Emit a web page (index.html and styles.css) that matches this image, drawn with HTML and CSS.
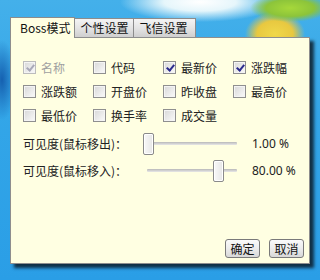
FILE: index.html
```html
<!DOCTYPE html>
<html>
<head>
<meta charset="utf-8">
<link rel="stylesheet" href="styles.css">
</head>
<body>
<div class="desktop">
  <div class="window">
    <div class="tabs">
      <div class="tab active">Boss模式</div>
      <div class="tab">个性设置</div>
      <div class="tab last">飞信设置</div>
    </div>
    <div class="panel">
      <div class="checks">
        <label class="opt disabled"><span class="box checked"></span>名称</label>
        <label class="opt"><span class="box"></span>代码</label>
        <label class="opt"><span class="box checked"></span>最新价</label>
        <label class="opt"><span class="box checked"></span>涨跌幅</label>
        <label class="opt"><span class="box"></span>涨跌额</label>
        <label class="opt"><span class="box"></span>开盘价</label>
        <label class="opt"><span class="box"></span>昨收盘</label>
        <label class="opt"><span class="box"></span>最高价</label>
        <label class="opt"><span class="box"></span>最低价</label>
        <label class="opt"><span class="box"></span>换手率</label>
        <label class="opt"><span class="box"></span>成交量</label>
      </div>
      <div class="sliders">
        <div class="slider-row">
          <span class="slabel">可见度(鼠标移出)：</span>
          <div class="slider"><div class="track"></div><div class="thumb" style="left:0px"></div></div>
          <span class="sval">1.00 %</span>
        </div>
        <div class="slider-row">
          <span class="slabel">可见度(鼠标移入)：</span>
          <div class="slider"><div class="track"></div><div class="thumb" style="left:70px"></div></div>
          <span class="sval">80.00 %</span>
        </div>
      </div>
      <div class="buttons">
        <button class="btn">确定</button>
        <button class="btn">取消</button>
      </div>
    </div>
  </div>
</div>
</body>
</html>
```
FILE: styles.css
```css
html, body {
  margin: 0;
  padding: 0;
}
body {
  width: 320px;
  height: 280px;
  overflow: hidden;
  font-family: "Noto Sans CJK SC", "Noto Sans", sans-serif;
  font-size: 12px;
  color: #222;
}
.desktop {
  width: 320px;
  height: 280px;
  padding-top: 17px;
  padding-left: 10px;
  box-sizing: border-box;
  background:
    radial-gradient(ellipse 40px 14px at 290px 8px, #a6d83a 0%, #8cc43a 60%, rgba(140,196,58,0) 100%),
    radial-gradient(ellipse 30px 22px at 275px 34px, #f0d84a 0%, #e8c840 60%, rgba(232,200,64,0) 100%),
    radial-gradient(ellipse 80px 20px at 200px 2px, #ffffff 0%, #e6f6fb 45%, rgba(200,236,250,0) 100%),
    radial-gradient(ellipse 14px 40px at 2px 80px, #1560b0 0%, rgba(21,96,176,0) 100%),
    linear-gradient(180deg, #44b0ea 0%, #33a6e8 40%, #2a9ee6 100%);
}
.window {
  width: 300px;
}
.tabs {
  display: flex;
  align-items: flex-end;
  height: 20px;
  position: relative;
  z-index: 2;
}
.tab {
  height: 18px;
  line-height: 18px;
  padding: 0 5px;
  border: 1px solid #8c8c8c;
  border-bottom: none;
  background: linear-gradient(180deg, #f4f4f4 0%, #e4e4e4 50%, #cfcfcf 100%);
  font-size: 12px;
  color: #111;
  margin-left: -1px;
}
.tab:first-child {
  margin-left: 0;
}
.tab.last {
  padding-right: 8px;
}
.tab.active {
  height: 20px;
  line-height: 20px;
  padding: 0 4px 0 9px;
  background: #ffffe2;
  margin-bottom: -1px;
  position: relative;
  z-index: 3;
}
.panel {
  position: relative;
  z-index: 1;
  height: 227px;
  box-sizing: border-box;
  border: 1px solid #8e8e8e;
  background: #ffffe2;
  box-shadow: 4px 4px 3px rgba(10, 20, 30, 0.8);
  padding: 17px 5px 5px 12px;
  display: flex;
  flex-direction: column;
}
.checks {
  display: grid;
  grid-template-columns: repeat(4, 70px);
  grid-auto-rows: 24px;
}
.opt {
  display: flex;
  align-items: center;
  gap: 5px;
  font-size: 12px;
  color: #222;
}
.opt.disabled {
  color: #a0a0a0;
}
.box {
  width: 11px;
  height: 11px;
  border: 1px solid #8f8f8f;
  background: linear-gradient(135deg, #d8d8d8 0%, #ececec 60%, #fafafa 100%);
  box-shadow: inset 0 0 0 1px #f4f4f4;
  position: relative;
  flex: none;
}
.box.checked::after {
  content: "";
  position: absolute;
  left: 4px;
  top: 1px;
  width: 3px;
  height: 6px;
  border: solid #2a2a8c;
  border-width: 0 2px 2px 0;
  transform: rotate(40deg);
}
.disabled .box {
  border-color: #bcbcbc;
}
.disabled .box.checked::after {
  border-color: #a8a8b8;
}
.sliders {
  margin-top: 3px;
}
.slider-row {
  display: flex;
  align-items: center;
  height: 27px;
}
.slabel {
  width: 120px;
}
.slider {
  position: relative;
  width: 94px;
  height: 21px;
}
.track {
  position: absolute;
  left: 4px;
  right: 0;
  top: 9px;
  height: 3px;
  background: linear-gradient(180deg, #b8b8b8 0%, #e8e8e8 100%);
  border-radius: 1px;
}
.thumb {
  position: absolute;
  top: 0;
  width: 9px;
  height: 20px;
  border: 1px solid #8a8a8a;
  border-radius: 2px;
  background: linear-gradient(90deg, #f8f8f8 0%, #e6e6e6 100%);
  box-shadow: inset 0 0 0 1px #ffffff;
}
.sval {
  margin-left: 15px;
  font-family: "Noto Sans", sans-serif;
  font-size: 12px;
}
.buttons {
  margin-top: auto;
  display: flex;
  justify-content: flex-end;
  gap: 9px;
}
.btn {
  width: 35px;
  height: 19px;
  padding: 0;
  border: 1px solid #7a7a7a;
  border-radius: 3px;
  background: linear-gradient(180deg, #fafafa 0%, #ececec 50%, #d8d8d8 100%);
  font-family: "Noto Sans CJK SC", sans-serif;
  font-size: 12px;
  line-height: 17px;
  color: #111;
}
```
